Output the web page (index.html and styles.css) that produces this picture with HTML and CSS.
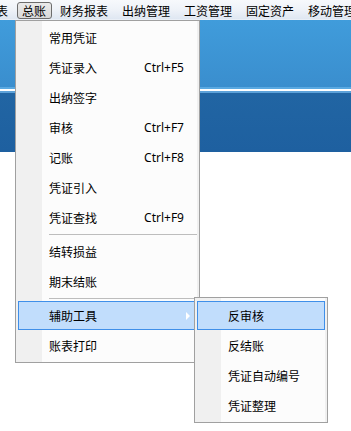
FILE: index.html
```html
<!DOCTYPE html>
<html lang="zh">
<head>
<meta charset="utf-8">
<link rel="stylesheet" href="styles.css">
</head>
<body>
<div class="app">
  <nav class="menubar">
    <span class="mb-item first">报表</span>
    <span class="mb-item active">总账</span>
    <span class="mb-item">财务报表</span>
    <span class="mb-item">出纳管理</span>
    <span class="mb-item">工资管理</span>
    <span class="mb-item">固定资产</span>
    <span class="mb-item">移动管理</span>
  </nav>
  <div class="banner"></div>

  <div class="menu main-menu">
    <div class="mi"><span class="label">常用凭证</span></div>
    <div class="mi"><span class="label">凭证录入</span><span class="key">Ctrl+F5</span></div>
    <div class="mi"><span class="label">出纳签字</span></div>
    <div class="mi"><span class="label">审核</span><span class="key">Ctrl+F7</span></div>
    <div class="mi"><span class="label">记账</span><span class="key">Ctrl+F8</span></div>
    <div class="mi"><span class="label">凭证引入</span></div>
    <div class="mi"><span class="label">凭证查找</span><span class="key">Ctrl+F9</span></div>
    <div class="sep"></div>
    <div class="mi"><span class="label">结转损益</span></div>
    <div class="mi"><span class="label">期末结账</span></div>
    <div class="sep"></div>
    <div class="mi hl has-sub"><span class="label">辅助工具</span><span class="arrow"></span>
      <div class="menu sub-menu">
        <div class="mi hl"><span class="label">反审核</span></div>
        <div class="mi"><span class="label">反结账</span></div>
        <div class="mi"><span class="label">凭证自动编号</span></div>
        <div class="mi"><span class="label">凭证整理</span></div>
      </div>
    </div>
    <div class="mi"><span class="label">账表打印</span></div>
  </div>
</div>
</body>
</html>
```

FILE: styles.css
```css
html, body {
  margin: 0;
  padding: 0;
  background: #ffffff;
}

body {
  font-family: "Noto Sans CJK SC", "Noto Sans", sans-serif;
  font-size: 12px;
  color: #000;
  overflow: hidden;
}

.app {
  position: relative;
  width: 351px;
  height: 431px;
  overflow: hidden;
}

.menubar {
  display: flex;
  gap: 3px;
  height: 20px;
  background: linear-gradient(to bottom, #f7f9fc 0, #eef2f8 50%, #dfe7f2 95%, #f4f7fb 100%);
  white-space: nowrap;
}

.mb-item {
  box-sizing: border-box;
  height: 17px;
  margin-top: 2px;
  padding: 0 5px 0 4px;
  line-height: 15px;
  border: 1px solid transparent;
  border-radius: 3px;
}

.mb-item.first {
  margin-left: -21px;
}

.mb-item.active {
  border-color: #6d6d6d;
  background: linear-gradient(to bottom, #eaeaea, #d9d9d9);
}

.banner {
  height: 132px;
  background: linear-gradient(to bottom,
    #409cdb 0, #3a8ece 67px,
    #5aa9e1 67px, #5aa9e1 69px,
    #ffffff 69px, #ffffff 71px,
    #5da2d9 71px, #5da2d9 73px,
    #2165a3 73px, #1e60a0 132px);
}

.menu {
  position: absolute;
  box-sizing: border-box;
  border: 1px solid #a0a0a0;
  padding: 2px 2px 1px 2px;
  background: linear-gradient(to right,
    #f0f0f0 26px, #fcfcfc 26px,
    #fcfcfc calc(100% - 2px), #f0f0f0 calc(100% - 2px));
}

.main-menu {
  left: 15px;
  top: 20px;
  width: 185px;
}

.mi {
  position: relative;
  box-sizing: border-box;
  display: flex;
  align-items: center;
  height: 29px;
  margin-bottom: 1px;
  border: 1px solid transparent;
  white-space: nowrap;
}

.mi .label {
  flex: 1;
  padding-left: 30px;
}

.mi .key {
  font-family: "Noto Sans", sans-serif;
  font-size: 12px;
  padding-right: 12px;
}

.mi.hl {
  background: #c1ddfc;
  border-color: #3f8fe9;
}

.arrow {
  width: 0;
  height: 0;
  border-top: 4px solid transparent;
  border-bottom: 4px solid transparent;
  border-left: 4px solid #ffffff;
  margin-right: 6px;
}

.sep {
  height: 4px;
  margin-left: 31px;
  background: linear-gradient(to bottom, transparent 1px, #bdbdbd 1px, #bdbdbd 2px, transparent 2px);
}

.sub-menu {
  left: 175px;
  top: -5px;
  width: 134px;
  padding: 3px 2px 1px 2px;
}
```
